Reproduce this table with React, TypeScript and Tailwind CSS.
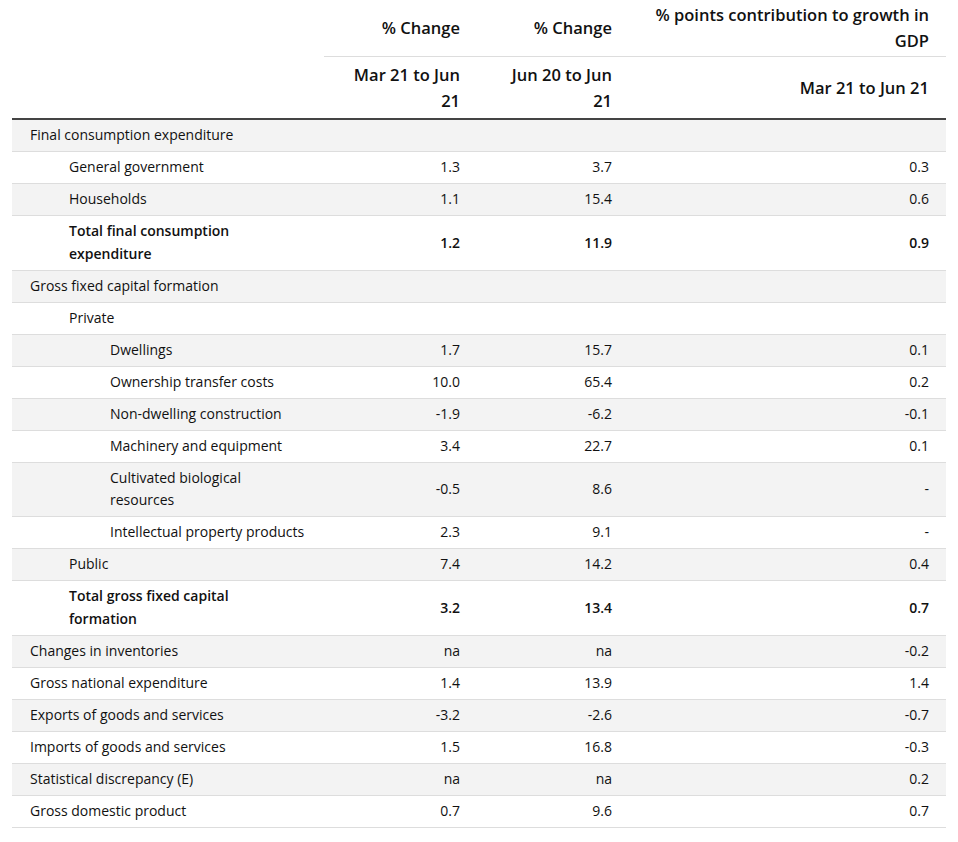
import React from "react";

type Row = {
  label: string;
  level: 0 | 1 | 2;
  a: string;
  b: string;
  c: string;
  bold?: boolean;
};

const rows: Row[] = [
  { label: "Final consumption expenditure", level: 0, a: "", b: "", c: "" },
  { label: "General government", level: 1, a: "1.3", b: "3.7", c: "0.3" },
  { label: "Households", level: 1, a: "1.1", b: "15.4", c: "0.6" },
  { label: "Total final consumption expenditure", level: 1, a: "1.2", b: "11.9", c: "0.9", bold: true },
  { label: "Gross fixed capital formation", level: 0, a: "", b: "", c: "" },
  { label: "Private", level: 1, a: "", b: "", c: "" },
  { label: "Dwellings", level: 2, a: "1.7", b: "15.7", c: "0.1" },
  { label: "Ownership transfer costs", level: 2, a: "10.0", b: "65.4", c: "0.2" },
  { label: "Non-dwelling construction", level: 2, a: "-1.9", b: "-6.2", c: "-0.1" },
  { label: "Machinery and equipment", level: 2, a: "3.4", b: "22.7", c: "0.1" },
  { label: "Cultivated biological resources", level: 2, a: "-0.5", b: "8.6", c: "-" },
  { label: "Intellectual property products", level: 2, a: "2.3", b: "9.1", c: "-" },
  { label: "Public", level: 1, a: "7.4", b: "14.2", c: "0.4" },
  { label: "Total gross fixed capital formation", level: 1, a: "3.2", b: "13.4", c: "0.7", bold: true },
  { label: "Changes in inventories", level: 0, a: "na", b: "na", c: "-0.2" },
  { label: "Gross national expenditure", level: 0, a: "1.4", b: "13.9", c: "1.4" },
  { label: "Exports of goods and services", level: 0, a: "-3.2", b: "-2.6", c: "-0.7" },
  { label: "Imports of goods and services", level: 0, a: "1.5", b: "16.8", c: "-0.3" },
  { label: "Statistical discrepancy (E)", level: 0, a: "na", b: "na", c: "0.2" },
  { label: "Gross domestic product", level: 0, a: "0.7", b: "9.6", c: "0.7" },
];

const indent = ["pl-[18px]", "pl-[57px]", "pl-[98px]"];

export default function App() {
  return (
    <div
      className="bg-white text-[#111] px-[12px] pt-0 pb-4"
      style={{ fontFamily: '"Segoe UI", "Open Sans", "Noto Sans", sans-serif' }}
    >
      <table className="w-[934px] border-collapse table-fixed">
        <colgroup>
          <col className="w-[312px]" />
          <col className="w-[153px]" />
          <col className="w-[152px]" />
          <col className="w-[317px]" />
        </colgroup>
        <thead className="text-[16.5px] leading-[25.5px] font-semibold">
          <tr>
            <th rowSpan={2} className="border-b-2 border-[#444]"></th>
            <th className="text-right align-middle font-semibold pl-[18px] pr-[17px] pt-[2px] pb-[3px] border-b border-[#ddd]">
              % Change
            </th>
            <th className="text-right align-middle font-semibold pl-[18px] pr-[17px] pt-[2px] pb-[3px] border-b border-[#ddd]">
              % Change
            </th>
            <th className="text-right align-middle font-semibold pl-[18px] pr-[17px] pt-[2px] pb-[3px] border-b border-[#ddd]">
              % points contribution to growth in GDP
            </th>
          </tr>
          <tr>
            <th className="text-right align-middle font-semibold pl-[18px] pr-[17px] pt-[5px] pb-[5px] border-b-2 border-[#444]">
              Mar 21 to Jun 21
            </th>
            <th className="text-right align-middle font-semibold pl-[18px] pr-[17px] pt-[5px] pb-[5px] border-b-2 border-[#444]">
              Jun 20 to Jun 21
            </th>
            <th className="text-right align-middle font-semibold pl-[18px] pr-[17px] pt-[5px] pb-[5px] border-b-2 border-[#444]">
              Mar 21 to Jun 21
            </th>
          </tr>
        </thead>
        <tbody className="text-[14px] leading-[22.5px]">
          {rows.map((r, i) => (
            <tr
              key={i}
              className={`${i % 2 === 0 ? "bg-[#f3f3f3]" : "bg-white"} border-b border-[#ddd] ${
                r.bold ? "font-semibold" : "font-normal"
              }`}
            >
              <td className={`${indent[r.level]} pr-[18px] py-[4.25px] align-middle text-left`}>
                <div className={r.bold ? "max-w-[220px]" : r.level === 2 ? "max-w-[196px]" : ""}>{r.label}</div>
              </td>
              <td className="pl-[18px] pr-[17px] py-[4.25px] align-middle text-right">{r.a}</td>
              <td className="pl-[18px] pr-[17px] py-[4.25px] align-middle text-right">{r.b}</td>
              <td className="pl-[18px] pr-[17px] py-[4.25px] align-middle text-right">{r.c}</td>
            </tr>
          ))}
        </tbody>
      </table>
    </div>
  );
}
